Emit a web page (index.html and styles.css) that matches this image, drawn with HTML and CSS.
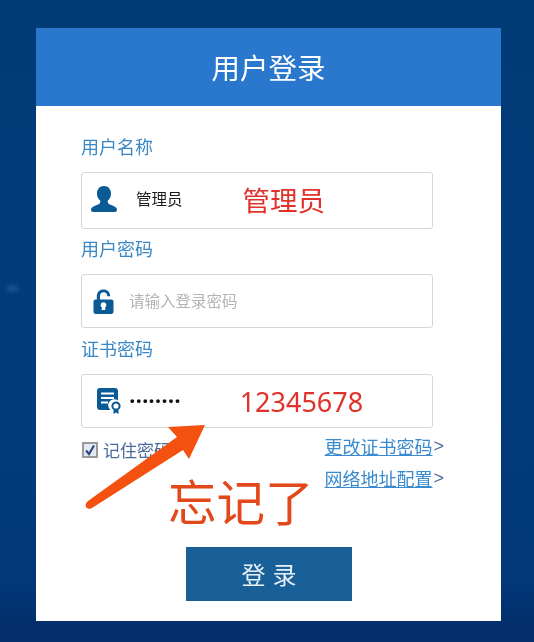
FILE: index.html
```html
<!DOCTYPE html>
<html lang="zh">
<head>
<meta charset="utf-8">
<title>用户登录</title>
<link rel="stylesheet" href="styles.css">
</head>
<body>
<div class="speck"></div>
<main class="card">
  <header class="card-head">用户登录</header>
  <form class="form">
    <div class="label label-first">用户名称</div>
    <div class="field field-tall">
      <svg class="icon" viewBox="0 0 28 26"><path d="M14 0c4.200 0 7 3.200 7 7.400 0 3-1.300 5.600-3.200 7.200v1.600c0 1.200 1.200 1.900 3.500 2.900 3.200 1.300 5.700 2.600 5.700 4.700 0 1.400-.9 2.200-2.300 2.200H3.300C1.900 26 1 25.200 1 23.800c0-2.100 2.500-3.400 5.700-4.700 2.300-1 3.500-1.700 3.500-2.900v-1.600C8.300 13 7 10.400 7 7.400 7 3.200 9.800 0 14 0z" fill="#0a5a96"/></svg>
      <span class="value">管理员</span>
      <span class="note note-name">管理员</span>
    </div>
    <div class="label">用户密码</div>
    <div class="field">
      <svg class="icon" viewBox="0 0 22 26"><path d="M4 11V7.500C4 3.300 7 .5 11 .5c3.900 0 7 2.800 7 7h-3c0-2.600-1.700-4.100-4-4.100S7.300 5 7.300 7.500V11H19c1.700 0 2.500.9 2.500 2.500v10c0 1.600-.8 2.500-2.500 2.500H3c-1.700 0-2.500-.9-2.500-2.500v-10C.500 11.900 1.300 11 3 11z" fill="#0a5a96"/><circle cx="11" cy="16.800" r="2.900" fill="#fff"/><path d="M9.600 17.500h2.800l.6 4.500H9z" fill="#fff"/></svg>
      <span class="placeholder">请输入登录密码</span>
    </div>
    <div class="label">证书密码</div>
    <div class="field">
      <svg class="icon icon-cert" viewBox="0 0 24 26"><path d="M3 0h15c1.800 0 3 1.200 3 3v9.500a6 6 0 0 0-7.500 9.500H3c-1.800 0-3-1.200-3-3V3C0 1.200 1.200 0 3 0z" fill="#0a5a96"/><path d="M4 5.500h13M4 10h13M4 14.500h7" stroke="#fff" stroke-width="2" fill="none"/><circle cx="19" cy="18" r="3.600" fill="none" stroke="#0a5a96" stroke-width="2"/><path d="M16.500 22v4l2.500-1.500 2.500 1.500v-4z" fill="#0a5a96"/></svg>
      <span class="dots">••••••••</span>
      <span class="note note-pass">12345678</span>
    </div>
    <div class="options">
      <label class="remember"><span class="check"><svg viewBox="0 0 12 12"><path d="M2 6.500 5 10l5-8.500" fill="none" stroke="#2f4a86" stroke-width="2.200"/></svg></span>记住密码</label>
      <div class="links">
        <div class="link-row"><a class="link">更改证书密码</a><span class="gt">&gt;</span></div>
        <div class="link-row"><a class="link">网络地址配置</a><span class="gt">&gt;</span></div>
      </div>
    </div>
    <div class="submit-row"><button class="submit" type="button">登录</button></div>
  </form>
  <svg class="arrow" viewBox="0 0 140 100"><path d="M120 1 83 3 92 13 3 77c-2 1.500-3 4-2 6 1.200 2 4 2.300 6 1L98 26l6 9z" fill="#f4500f"/></svg>
  <div class="forgot">忘记了</div>
</main>
</body>
</html>
```
FILE: styles.css
```css
html, body {
  margin: 0;
  height: 642px;
  overflow: hidden;
}
body {
  position: relative;
  background: linear-gradient(180deg, #023a76 0%, #023c7b 45%, #02387a 90%, #022f6c 97%, #022f6c 100%);
  font-family: "Noto Sans CJK SC", "Liberation Sans", sans-serif;
  padding-top: 28px;
  box-sizing: border-box;
}
.speck {
  position: absolute;
  left: 7px;
  top: 286px;
  width: 11px;
  height: 5px;
  background: #1f5a94;
  filter: blur(2px);
}
.card {
  position: relative;
  width: 465px;
  height: 593px;
  margin-left: 36px;
  background: #fff;
  filter: blur(0.4px);
}
.card-head {
  height: 78px;
  background: #2a78ce;
  color: #fff;
  font-size: 28.500px;
  line-height: 78px;
  text-align: center;
}
.form {
  padding: 0 56px 0 45px;
}
.label {
  height: 45px;
  line-height: 38px;
  font-size: 18px;
  color: #3a87c6;
}
.label-first {
  height: 66px;
  line-height: 80px;
}
.field {
  box-sizing: border-box;
  width: 352px;
  height: 54px;
  border: 1px solid #d6d6d6;
  border-radius: 3px;
  display: flex;
  align-items: center;
  padding-left: 11px;
}
.field + .label + .field + .label {
  height: 46px;
  line-height: 40px;
}
.field-tall {
  height: 57px;
  padding-left: 8px;
}
.icon {
  width: 21px;
  height: 25px;
  flex: none;
}
.field-tall .icon {
  width: 28px;
  height: 26px;
  margin-top: -3px;
}
.icon-cert {
  width: 24px;
  height: 26px;
  margin-left: 4px;
}
.value {
  margin-left: 18px;
  font-size: 15.500px;
  color: #1c1c1c;
  margin-top: -6px;
}
.placeholder {
  margin-left: 15px;
  font-size: 15.500px;
  color: #b4b4b4;
  margin-top: -3px;
}
.dots {
  margin-left: 9px;
  font-family: "Liberation Sans", sans-serif;
  font-size: 13px;
  font-weight: 700;
  letter-spacing: 1.900px;
  color: #111;
  margin-top: -2px;
}
.note {
  color: #e0322a;
  font-size: 27.500px;
}
.note-name {
  margin-left: 60px;
  margin-top: -3px;
}
.note-pass {
  margin-left: 58px;
  font-family: "Noto Sans", sans-serif;
  font-size: 27px;
  line-height: 1;
}
.options {
  display: flex;
  justify-content: space-between;
  height: 119px;
}
.remember {
  display: flex;
  align-items: center;
  height: 17px;
  margin-top: 13px;
  font-size: 17px;
  color: #4a6a9c;
}
.check {
  box-sizing: border-box;
  width: 16px;
  height: 16px;
  margin: 0 5px 0 1px;
  border: 2px solid #9a9a9a;
  background: #e4e8f2;
  display: flex;
}
.links {
  padding-top: 5px;
  margin-right: 1px;
}
.link-row {
  display: flex;
  height: 32px;
  line-height: 26px;
  font-size: 18px;
}
.link {
  color: #3a8ad0;
  text-decoration: underline;
}
.gt {
  color: #4a6a9c;
  margin-left: 1px;
  font-family: "Liberation Sans", sans-serif;
}
.submit-row {
  padding-left: 105px;
}
.submit {
  display: block;
  width: 166px;
  height: 54px;
  border: 0;
  background: #1a6098;
  color: #e6f0f8;
  font-family: inherit;
  font-size: 24px;
  letter-spacing: 7px;
  padding: 0 0 1px 7px;
}
.arrow {
  position: absolute;
  left: 49px;
  top: 396px;
  width: 140px;
  height: 100px;
}
.forgot {
  position: absolute;
  left: 132px;
  top: 439px;
  font-size: 48.500px;
  line-height: 66px;
  color: #e2481a;
}
```
